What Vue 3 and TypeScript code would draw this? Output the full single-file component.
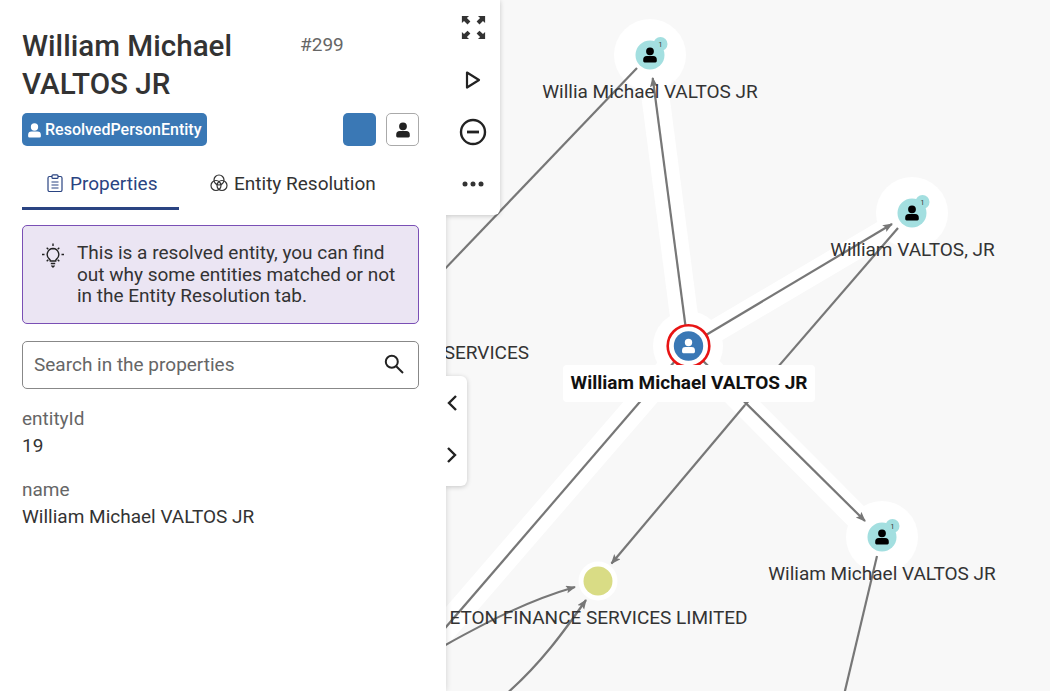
<script setup lang="ts">
interface GraphNode { x: number; y: number; label: string; lx: number; ly: number }
const people: GraphNode[] = [
  { x: 650, y: 55, label: 'Willia Michael VALTOS JR', lx: 650, ly: 98 },
  { x: 912, y: 213, label: 'William VALTOS, JR', lx: 912.5, ly: 256 },
  { x: 882, y: 537, label: 'Wiliam Michael VALTOS JR', lx: 882, ly: 580 },
]
const person = 'M0-7.6a3.9 3.9 0 1 1 0 7.8a3.9 3.9 0 1 1 0-7.8ZM-3.2 1.1h6.4a3.6 3.6 0 0 1 3.6 3.6v1.4a1.4 1.4 0 0 1-1.4 1.4h-10.8a1.4 1.4 0 0 1-1.4-1.4v-1.4a3.6 3.6 0 0 1 3.6-3.6Z'
</script>

<template>
  <div class="app">
    <aside class="panel">
      <header class="head">
        <h1 class="title">William Michael VALTOS JR</h1>
        <span class="num">#299</span>
      </header>
      <div class="meta">
        <span class="tag">
          <svg class="tag-icon" viewBox="-8 -9 16 17"><path :d="person" fill="#fff" /></svg>
          ResolvedPersonEntity
        </span>
        <span class="swatch"></span>
        <button class="icon-btn">
          <svg viewBox="-8 -9 16 17" width="16" height="17"><path :d="person" fill="#222" /></svg>
        </button>
      </div>
      <nav class="tabs">
        <div class="tab active">
          <svg width="16" height="18" viewBox="0 0 16 18" fill="none" stroke="#2a4482" stroke-width="1.2">
            <rect x="1" y="2.5" width="14" height="15" rx="1.5" />
            <rect x="5" y="0.8" width="6" height="3.6" rx="1" fill="#fff" />
            <path d="M4.5 8h7M4.5 11h7M4.5 14h7" />
          </svg>
          Properties
        </div>
        <div class="tab">
          <svg width="18" height="18" viewBox="0 0 18 18" fill="none" stroke="#333" stroke-width="1.2">
            <circle cx="9" cy="6" r="5" />
            <circle cx="6" cy="11.5" r="5" />
            <circle cx="12" cy="11.5" r="5" />
          </svg>
          Entity Resolution
        </div>
      </nav>
      <div class="alert">
        <svg class="bulb" width="24" height="28" viewBox="0 0 24 28" fill="none" stroke="#222" stroke-width="1.4">
          <path d="M12 9a6 6 0 0 1 3.6 10.6c-.7.6-.9 1-.9 1.9h-5.4c0-.9-.2-1.3-.9-1.9A6 6 0 0 1 12 9Z" transform="translate(0 -2.5)" />
          <path d="M9.8 21.5h4.4M10.5 23.5l1.5 1.5 1.5-1.5" />
          <path d="M12 1.5v2.6M3.5 12.5h-2.5M23 12.5h-2.5M5.7 5.7l1.6 1.6M18.3 5.7l-1.6 1.6M5.7 19.3l1.6-1.6M18.3 19.3l-1.6-1.6" />
        </svg>
        <p>This is a resolved entity, you can find out why some entities matched or not in the Entity Resolution tab.</p>
      </div>
      <label class="search">
        <input type="text" placeholder="Search in the properties" />
        <svg width="22" height="22" viewBox="0 0 22 22" fill="none" stroke="#222" stroke-width="2">
          <circle cx="8.8" cy="8.8" r="6" />
          <path d="m13.2 13.2 6.8 6.8" />
        </svg>
      </label>
      <dl class="props">
        <div class="prop"><dt>entityId</dt><dd>19</dd></div>
        <div class="prop"><dt>name</dt><dd>William Michael VALTOS JR</dd></div>
      </dl>
    </aside>

    <main class="graph">
      <svg class="canvas" viewBox="446 0 604 691" width="604" height="691">
        <defs>
          <marker id="arrow" markerWidth="12" markerHeight="10" refX="9" refY="4" orient="auto" markerUnits="userSpaceOnUse">
            <path d="M0 0 10 4 0 8 2 4Z" fill="#777" />
          </marker>
        </defs>
        <g stroke="#fff" fill="none">
          <path d="M688 347 652 70" stroke-width="28" />
          <path d="M688 347 900 222" stroke-width="23" />
          <path d="M688 347 870 530" stroke-width="25" />
          <path d="M688 347 400 680" stroke-width="26" />
        </g>
        <circle v-for="n in people" :key="n.x" :cx="n.x" :cy="n.y" r="36" fill="#fff" />
        <circle cx="688" cy="346" r="35" fill="#fff" />
        <circle cx="598" cy="581" r="19.5" fill="#fff" />

        <g stroke="#777" stroke-width="2.2" fill="none" marker-end="url(#arrow)">
          <path d="M685.5 326 652.7 78" />
          <path d="M706 335 892 224" />
          <path d="M688 346 865 521" />
          <path d="M745 405 611.5 563.5" />
          <path d="M440 648C490 620 530 600 575 587" />
          <path d="M505 695C540 665 565 630 586 600" />
        </g>
        <g stroke="#777" stroke-width="2.2" fill="none">
          <path d="M637 68 440 274" />
          <path d="M745 405 898 228" />
          <path d="M688 346 440 634" />
          <path d="M877 556 844 695" />
        </g>

        <g v-for="n in people" :key="n.label">
          <circle :cx="n.x + 10.5" :cy="n.y - 11" r="7" fill="#a3dfe0" />
          <circle :cx="n.x" :cy="n.y" r="14.5" fill="#a3dfe0" />
          <text :x="n.x + 10.5" :y="n.y - 8.5" class="count">1</text>
          <path :d="person" :transform="`translate(${n.x} ${n.y})`" fill="#000" />
          <text :x="n.lx" :y="n.ly" class="lbl">{{ n.label }}</text>
        </g>

        <circle cx="598" cy="581" r="14.5" fill="#d9dc85" />
        <text x="598.5" y="624" class="lbl">ETON FINANCE SERVICES LIMITED</text>
        <text x="529" y="359" class="lbl end">SERVICES</text>

        <circle cx="688.5" cy="346" r="20.8" fill="#fff" stroke="#e81414" stroke-width="2.6" />
        <circle cx="688.5" cy="346" r="14.7" fill="#3a78b5" />
        <path :d="person" :transform="'translate(688.5 346) scale(.95)'" fill="#fff" />
        <rect x="563" y="365" width="252" height="37" rx="4" fill="#fff" />
        <text x="689" y="389" class="lbl strong">William Michael VALTOS JR</text>
      </svg>

      <div class="toolbar">
        <span class="tool">
          <svg width="25" height="25" viewBox="0 0 28 28" fill="#333">
            <path d="M1 1h8L6.6 3.4 10.5 7.3 7.3 10.5 3.4 6.6 1 9ZM27 1v8l-2.4-2.4-3.9 3.9-3.2-3.2 3.9-3.9L19 1ZM1 27v-8l2.4 2.4 3.9-3.9 3.2 3.2-3.9 3.9L9 27ZM27 27h-8l2.4-2.4-3.9-3.9 3.2-3.2 3.9 3.9L27 19Z" />
          </svg>
        </span>
        <span class="tool">
          <svg width="18" height="20" viewBox="0 0 18 20" fill="none" stroke="#222" stroke-width="2.2" stroke-linejoin="round">
            <path d="M3 2.5 15 10 3 17.5Z" />
          </svg>
        </span>
        <span class="tool">
          <svg width="28" height="28" viewBox="0 0 28 28" fill="none" stroke="#222" stroke-width="2.4">
            <circle cx="14" cy="14" r="12" />
            <path d="M8 14h12" stroke-width="2.8" />
          </svg>
        </span>
        <span class="tool">
          <svg width="22" height="6" viewBox="0 0 22 6" fill="#333">
            <circle cx="3" cy="3" r="2.5" /><circle cx="11" cy="3" r="2.5" /><circle cx="19" cy="3" r="2.5" />
          </svg>
        </span>
      </div>

      <div class="pager">
        <span class="page-btn">
          <svg width="12" height="18" viewBox="0 0 12 18" fill="none" stroke="#222" stroke-width="2.4"><path d="M10 2 3 9l7 7" /></svg>
        </span>
        <span class="page-btn">
          <svg width="12" height="18" viewBox="0 0 12 18" fill="none" stroke="#222" stroke-width="2.4"><path d="m2 2 7 7-7 7" /></svg>
        </span>
      </div>
    </main>
  </div>
</template>

<style>
html, body { margin: 0; }
</style>

<style scoped>
.app {
  display: flex;
  width: 1050px;
  height: 691px;
  overflow: hidden;
  background: #f8f8f8;
  font-family: Roboto, "Liberation Sans", sans-serif;
  font-size: 19px;
  color: #333;
}
.panel {
  box-sizing: border-box;
  width: 446px;
  flex: none;
  padding: 27px 27px 0 22px;
  background: #fff;
  position: relative;
  z-index: 1;
  box-shadow: 0 0 6px rgba(0, 0, 0, .16);
}
.head { display: flex; align-items: flex-start; }
.title {
  margin: 0;
  width: 278px;
  font-size: 29.6px;
  line-height: 38px;
  font-weight: 500;
  color: #333;
}
.num { color: #666; line-height: 36px; }
.meta { display: flex; align-items: center; margin-top: 10px; height: 33px; }
.tag {
  display: flex;
  align-items: center;
  gap: 3px;
  height: 33px;
  box-sizing: border-box;
  padding: 0 5px;
  border-radius: 5px;
  background: #3a78b5;
  color: #fff;
  font-size: 16px;
  font-weight: 500;
}
.tag-icon { width: 15px; height: 16px; }
.swatch { margin-left: auto; width: 33px; height: 33px; border-radius: 5px; background: #3a78b5; }
.icon-btn {
  display: flex;
  align-items: center;
  justify-content: center;
  margin-left: 10px;
  width: 33px;
  height: 33px;
  padding: 0;
  box-sizing: border-box;
  border: 1px solid #aaa;
  border-radius: 5px;
  background: #fff;
}
.tabs { display: flex; margin-top: 19px; height: 45px; }
.tab {
  display: flex;
  align-items: center;
  gap: 6px;
  box-sizing: border-box;
  height: 45px;
  padding: 0 0 9px 31px;
  color: #333;
}
.tab.active {
  width: 157px;
  padding-left: 25px;
  gap: 7px;
  color: #2a4482;
  border-bottom: 3px solid #2a4482;
  padding-bottom: 6px;
}
.alert {
  display: flex;
  gap: 12px;
  box-sizing: border-box;
  height: 99px;
  margin-top: 15px;
  padding: 16px 14px 0 18px;
  background: #ebe5f3;
  border: 1px solid #7a4fb5;
  border-radius: 5px;
}
.alert p { margin: 0; line-height: 21.5px; color: #333; }
.bulb { flex: none; }
.search {
  display: flex;
  align-items: center;
  box-sizing: border-box;
  height: 48px;
  margin-top: 17px;
  padding: 0 2px 2px 11px;
  border: 1px solid #888;
  border-radius: 5px;
}
.search input {
  flex: 1;
  min-width: 0;
  border: 0;
  outline: 0;
  padding: 0;
  font: inherit;
  color: #333;
  background: transparent;
}
.search input::placeholder { color: #666; opacity: 1; }
.search svg { margin-right: 11px; }
.props { margin: 19px 0 0; }
.prop { margin-bottom: 22px; }
.prop dt { color: #666; line-height: 22px; }
.prop dd { margin: 5px 0 0; line-height: 22px; color: #333; }
.graph { position: relative; flex: 1; min-width: 0; overflow: hidden; }
.canvas { display: block; }
.lbl { font-size: 19px; fill: #333; text-anchor: middle; }
.lbl.end { text-anchor: end; }
.lbl.strong { font-weight: 700; fill: #111; }
.count { font-size: 7px; fill: #333; text-anchor: middle; }
.toolbar {
  position: absolute;
  z-index: 2;
  left: 0;
  top: 0;
  box-sizing: border-box;
  width: 54px;
  height: 215px;
  padding-top: 2px;
  display: flex;
  flex-direction: column;
  background: #fff;
  border-radius: 0 0 6px 0;
  box-shadow: 0 1px 5px rgba(0, 0, 0, .2);
}
.tool {
  box-sizing: border-box;
  height: 52px;
  display: flex;
  align-items: center;
  justify-content: center;
}
.tool:first-child { padding-bottom: 2px; }
.pager {
  position: absolute;
  z-index: 2;
  left: 0;
  top: 376px;
  box-sizing: border-box;
  width: 21px;
  height: 110px;
  padding-top: 1px;
  display: flex;
  flex-direction: column;
  background: #fff;
  border-radius: 0 6px 6px 0;
  box-shadow: 0 1px 5px rgba(0, 0, 0, .2);
}
.page-btn {
  height: 52px;
  display: flex;
  align-items: center;
  width: 12px;
}
</style>
